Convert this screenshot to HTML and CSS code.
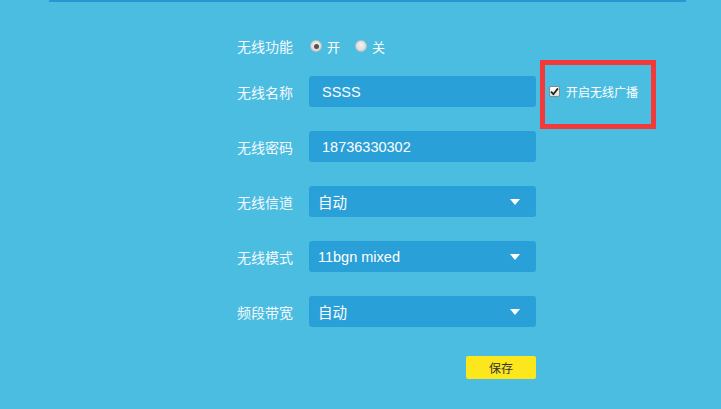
FILE: index.html
```html
<!DOCTYPE html>
<html lang="zh-CN">
<head>
<meta charset="utf-8">
<title>无线设置</title>
<link rel="stylesheet" href="styles.css">
</head>
<body>
<div class="topline"></div>
<div class="form">
  <div class="row row-radio">
    <span class="label">无线功能</span>
    <span class="radio on"></span><span class="opt">开</span>
    <span class="radio"></span><span class="opt">关</span>
  </div>
  <div class="row row-name">
    <span class="label">无线名称</span>
    <div class="field input">SSSS</div>
    <span class="check"><svg width="9" height="9" viewBox="0 0 9 9"><path d="M1 4.6 L3.4 7.2 L8 1.4" fill="none" stroke="#222" stroke-width="1.8"/></svg></span>
    <span class="check-text">开启无线广播</span>
    <div class="mark"></div>
  </div>
  <div class="row">
    <span class="label">无线密码</span>
    <div class="field input">18736330302</div>
  </div>
  <div class="row">
    <span class="label">无线信道</span>
    <div class="field select">自动<span class="arrow"></span></div>
  </div>
  <div class="row">
    <span class="label">无线模式</span>
    <div class="field select">11bgn mixed<span class="arrow"></span></div>
  </div>
  <div class="row">
    <span class="label">频段带宽</span>
    <div class="field select">自动<span class="arrow"></span></div>
  </div>
  <div class="row row-save">
    <span class="label"></span>
    <div class="save-wrap"><button class="save">保存</button></div>
  </div>
</div>
</body>
</html>
```

FILE: styles.css
```css
html, body {
  margin: 0;
  padding: 0;
  background: #4bbde1;
  height: 100%;
  overflow: hidden;
  font-family: "Liberation Sans", "Noto Sans CJK SC", sans-serif;
  color: #ffffff;
}

.topline {
  height: 2px;
  margin: 0 35px 0 49px;
  background: #2896cf;
}

.form {
  display: flex;
  flex-direction: column;
  padding-left: 237px;
  margin-top: 34px;
}

.row {
  display: flex;
  align-items: center;
  height: 31px;
  margin-bottom: 24px;
}

.row-radio {
  height: 20px;
  margin-bottom: 20px;
}

.row-name {
  position: relative;
}

.label {
  width: 72px;
  font-size: 14px;
  color: #f4faff;
  flex: none;
}

.radio {
  width: 10px;
  height: 10px;
  border-radius: 50%;
  background: radial-gradient(circle at 50% 40%, #f4f4f4, #cfcfcf);
  border: 1px solid #bdbdbd;
  box-sizing: content-box;
  margin-left: 1px;
  position: relative;
  flex: none;
}

.radio.on::after {
  content: "";
  position: absolute;
  left: 2.5px;
  top: 2.5px;
  width: 5px;
  height: 5px;
  border-radius: 50%;
  background: #5a5050;
}

.opt {
  font-size: 13px;
  margin-left: 5px;
  margin-right: 14px;
}

.field {
  width: 227px;
  height: 31px;
  box-sizing: border-box;
  background: #2aa0d8;
  border-radius: 3px;
  display: flex;
  align-items: center;
  font-size: 14.5px;
  color: #ffffff;
  flex: none;
}

.input {
  padding-left: 13px;
}

.select {
  padding-left: 9px;
  position: relative;
}

.arrow {
  position: absolute;
  right: 16px;
  top: 13px;
  width: 0;
  height: 0;
  border-left: 5px solid transparent;
  border-right: 5px solid transparent;
  border-top: 6px solid #ffffff;
}

.check {
  width: 11px;
  height: 11px;
  box-sizing: border-box;
  margin-left: 13px;
  background: linear-gradient(#ffffff, #e2e2e2);
  border: 1px solid #8a8a8a;
  border-radius: 2px;
  display: flex;
  align-items: center;
  justify-content: center;
  flex: none;
}

.check-text {
  font-size: 12px;
  margin-left: 6px;
  color: #ffffff;
}

.mark {
  position: absolute;
  left: 303px;
  top: -16px;
  width: 116px;
  height: 69px;
  box-sizing: border-box;
  border: 5px solid #f23a3a;
}

.row-save {
  height: 23px;
  margin-top: 5px;
}

.save-wrap {
  width: 227px;
  display: flex;
  justify-content: flex-end;
}

.save {
  width: 70px;
  height: 23px;
  border: none;
  border-radius: 2px;
  background: #fce61c;
  color: #333333;
  font-family: "Noto Sans CJK SC", sans-serif;
  font-size: 12px;
  padding: 0;
}
```
